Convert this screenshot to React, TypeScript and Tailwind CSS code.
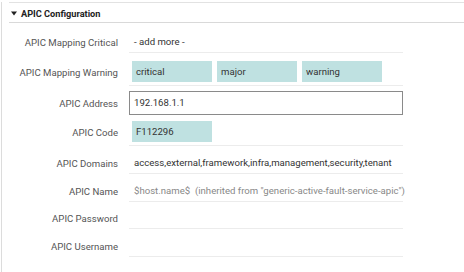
import React from "react";

const Row = ({
  label,
  h,
  children,
  line = true,
  pb,
  lpb,
}: {
  label: string;
  h: string;
  children?: React.ReactNode;
  line?: boolean;
  pb: string;
  lpb: string;
}) => (
  <div className={`flex ${h}`}>
    <div className={`w-[120px] pr-[11px] flex items-end justify-end text-[#555] whitespace-nowrap ${lpb}`}>{label}</div>
    <div className={`w-[274px] flex items-end ${pb} ${line ? "border-b border-[#ececec]" : ""}`}>{children}</div>
  </div>
);

const Chip = ({ text }: { text: string }) => (
  <div className="w-[80px] h-[21px] bg-[#bfe1e1] flex items-center pl-[4px] text-[#333]">{text}</div>
);

export default function App() {
  return (
    <div
      className="w-[464px] h-[272px] bg-white overflow-hidden text-[9.6px] leading-none"
      style={{ fontFamily: "Roboto, 'Noto Sans', sans-serif" }}
    >
      <div className="ml-[1px] h-full border-l border-[#dcdcdc] pl-[7px]">
        <div className="mt-[2px] border-t border-[#e2e2e2]">
          <div className="h-[20px] flex items-center border-b border-[#d9d9d9] pl-[2px] pt-[2px]">
            <svg width="6" height="5" viewBox="0 0 6 5" className="mr-[4px]">
              <path d="M0 0.5 L6 0.5 L3 4.5 Z" fill="#222" />
            </svg>
            <span className="font-bold text-[#222] text-[9.2px]">APIC Configuration</span>
          </div>
          <Row label="APIC Mapping Critical" h="h-[30px]" pb="pb-[5px]" lpb="pb-[5px]">
            <span className="pl-[5px] text-[#333]">- add more -</span>
          </Row>
          <Row label="APIC Mapping Warning" h="h-[33px]" pb="pb-[3px]" lpb="pb-[8px]">
            <div className="flex gap-[5px] pl-[3px]">
              <Chip text="critical" />
              <Chip text="major" />
              <Chip text="warning" />
            </div>
          </Row>
          <Row label="APIC Address" h="h-[30px]" line={false} pb="pb-[1px]" lpb="pb-[7px]">
            <div className="w-[274px] h-[24px] border border-[#8a8a8a] flex items-center pl-[4px] text-[#333]">
              192.168.1.1
            </div>
          </Row>
          <Row label="APIC Code" h="h-[30px]" pb="pb-[3px]" lpb="pb-[8px]">
            <div className="pl-[3px]">
              <Chip text="F112296" />
            </div>
          </Row>
          <Row label="APIC Domains" h="h-[28px]" pb="pb-[5px]" lpb="pb-[5px]">
            <span className="pl-[5px] text-[#333] whitespace-nowrap">
              access,external,framework,infra,management,security,tenant
            </span>
          </Row>
          <Row label="APIC Name" h="h-[28px]" pb="pb-[5px]" lpb="pb-[5px]">
            <span className="pl-[5px] text-[#888] whitespace-nowrap">
              $host.name$&nbsp;&nbsp;(inherited from "generic-active-fault-service-apic")
            </span>
          </Row>
          <Row label="APIC Password" h="h-[27px]" pb="pb-[5px]" lpb="pb-[5px]" />
          <Row label="APIC Username" h="h-[28px]" pb="pb-[5px]" lpb="pb-[5px]" />
        </div>
      </div>
    </div>
  );
}
